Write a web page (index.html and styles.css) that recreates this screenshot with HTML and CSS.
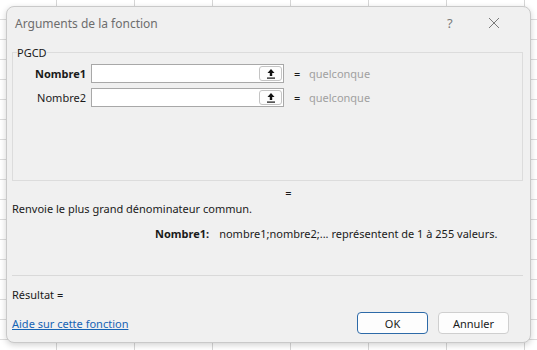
FILE: index.html
```html
<!DOCTYPE html>
<html lang="fr">
<head>
    <meta charset="UTF-8">
    <title>Arguments de la fonction</title>
    <link rel="stylesheet" href="styles.css">
</head>
<body>
    <div class="dialog">
        <div class="titlebar">
            <span class="title">Arguments de la fonction</span>
            <span class="help">?</span>
            <span class="close">
                <svg width="12" height="12" viewBox="0 0 12 12"><path d="M1 1 L11 11 M11 1 L1 11" stroke="#7a7a7a" stroke-width="1" fill="none"/></svg>
            </span>
        </div>

        <div class="content">
            <fieldset class="group">
                <legend>PGCD</legend>
                <div class="arg-row">
                    <label class="arg-label bold">Nombre1</label>
                    <div class="arg-input">
                        <span class="collapse-btn">
                            <svg width="10" height="11" viewBox="0 0 10 11"><path d="M5 1 L1.5 5 H3.8 V8 H6.2 V5 H8.5 Z" fill="#111"/><rect x="1" y="9.5" width="8" height="1.2" fill="#111"/></svg>
                        </span>
                    </div>
                    <span class="eq">=</span>
                    <span class="value">quelconque</span>
                </div>
                <div class="arg-row">
                    <label class="arg-label">Nombre2</label>
                    <div class="arg-input">
                        <span class="collapse-btn">
                            <svg width="10" height="11" viewBox="0 0 10 11"><path d="M5 1 L1.5 5 H3.8 V8 H6.2 V5 H8.5 Z" fill="#111"/><rect x="1" y="9.5" width="8" height="1.2" fill="#111"/></svg>
                        </span>
                    </div>
                    <span class="eq">=</span>
                    <span class="value">quelconque</span>
                </div>
            </fieldset>

            <div class="formula-result">=</div>
            <p class="description">Renvoie le plus grand dénominateur commun.</p>
            <p class="arg-help"><b>Nombre1:</b><span>nombre1;nombre2;... représentent de 1 à 255 valeurs.</span></p>

            <div class="separator"></div>

            <p class="result">Résultat =</p>

            <div class="footer">
                <a href="#" class="help-link">Aide sur cette fonction</a>
                <div class="buttons">
                    <button class="primary">OK</button>
                    <button>Annuler</button>
                </div>
            </div>
        </div>
    </div>
</body>
</html>
```

FILE: styles.css
```css
html, body {
    margin: 0;
    height: 100%;
}
body {
    font-family: "Noto Sans", "Open Sans", sans-serif;
    font-size: 11px;
    color: #1a1a1a;
    background-color: #fff;
    background-image:
        linear-gradient(to right, #d6d6d6 1px, transparent 1px),
        linear-gradient(to bottom, #dcdcdc 1px, transparent 1px);
    background-size: 78px 20px;
    background-position: 56px 19px;
    padding: 6px;
    box-sizing: border-box;
}
.dialog {
    width: 525px;
    height: 337px;
    background: #f0f0f0;
    border: 1px solid #c9c9c9;
    border-radius: 8px;
    box-sizing: border-box;
    box-shadow: 0 2px 6px rgba(0, 0, 0, 0.18);
    display: flex;
    flex-direction: column;
}
.titlebar {
    height: 32px;
    display: flex;
    align-items: center;
    padding-left: 8px;
    flex-shrink: 0;
}
.title {
    flex: 1;
    color: #6d6d6d;
    font-size: 12px;
}
.help {
    color: #7a7a7a;
    font-size: 13px;
    width: 20px;
    margin-right: 21px;
}
.close {
    display: flex;
    width: 30px;
    margin-right: 12px;
}
.content {
    padding: 0 7px 0 5px;
    flex: 1;
    display: flex;
    flex-direction: column;
}
.group {
    margin: 6px 0 0;
    padding: 3px 0 0;
    border: 1px solid #dcdcdc;
    height: 136px;
    box-sizing: border-box;
}
.group legend {
    padding: 0;
    margin-left: 4px;
    font-size: 11px;
}
.arg-row {
    display: flex;
    align-items: center;
    height: 20px;
    margin-bottom: 4px;
}
.arg-label {
    width: 73px;
    text-align: right;
    margin-right: 5px;
}
.bold {
    font-weight: bold;
}
.arg-input {
    width: 193px;
    height: 19px;
    box-sizing: border-box;
    background: #fff;
    border: 1px solid #a8a8a8;
    display: flex;
    justify-content: flex-end;
    align-items: center;
    padding-right: 1px;
}
.collapse-btn {
    width: 23px;
    height: 15px;
    box-sizing: border-box;
    border: 1px solid #c4c4c4;
    border-radius: 3px;
    background: #fdfdfd;
    display: flex;
    align-items: center;
    justify-content: center;
}
.eq {
    margin-left: 10px;
    width: 15px;
}
.value {
    color: #a0a0a0;
}
.formula-result {
    text-align: center;
    margin-top: 4px;
    height: 14px;
    padding-left: 42px;
}
.description {
    margin: 2px 0 0;
}
.arg-help {
    margin: 10px 0 0 143px;
}
.arg-help b {
    margin-right: 10px;
}
.separator {
    border-top: 1px solid #d9d9d9;
    margin-top: 34px;
}
.result {
    margin: 11px 0 0;
}
.footer {
    display: flex;
    justify-content: space-between;
    align-items: center;
    margin-top: 10px;
}
.help-link {
    color: #1764b5;
    text-decoration: underline;
}
.buttons {
    display: flex;
    gap: 10px;
    margin-right: 14px;
}
button {
    font-family: inherit;
    font-size: 11px;
    width: 71px;
    height: 22px;
    background: #fdfdfd;
    border: 1px solid #cfcfcf;
    border-radius: 4px;
    color: #1a1a1a;
}
button.primary {
    border-color: #2d6aa8;
}
```
